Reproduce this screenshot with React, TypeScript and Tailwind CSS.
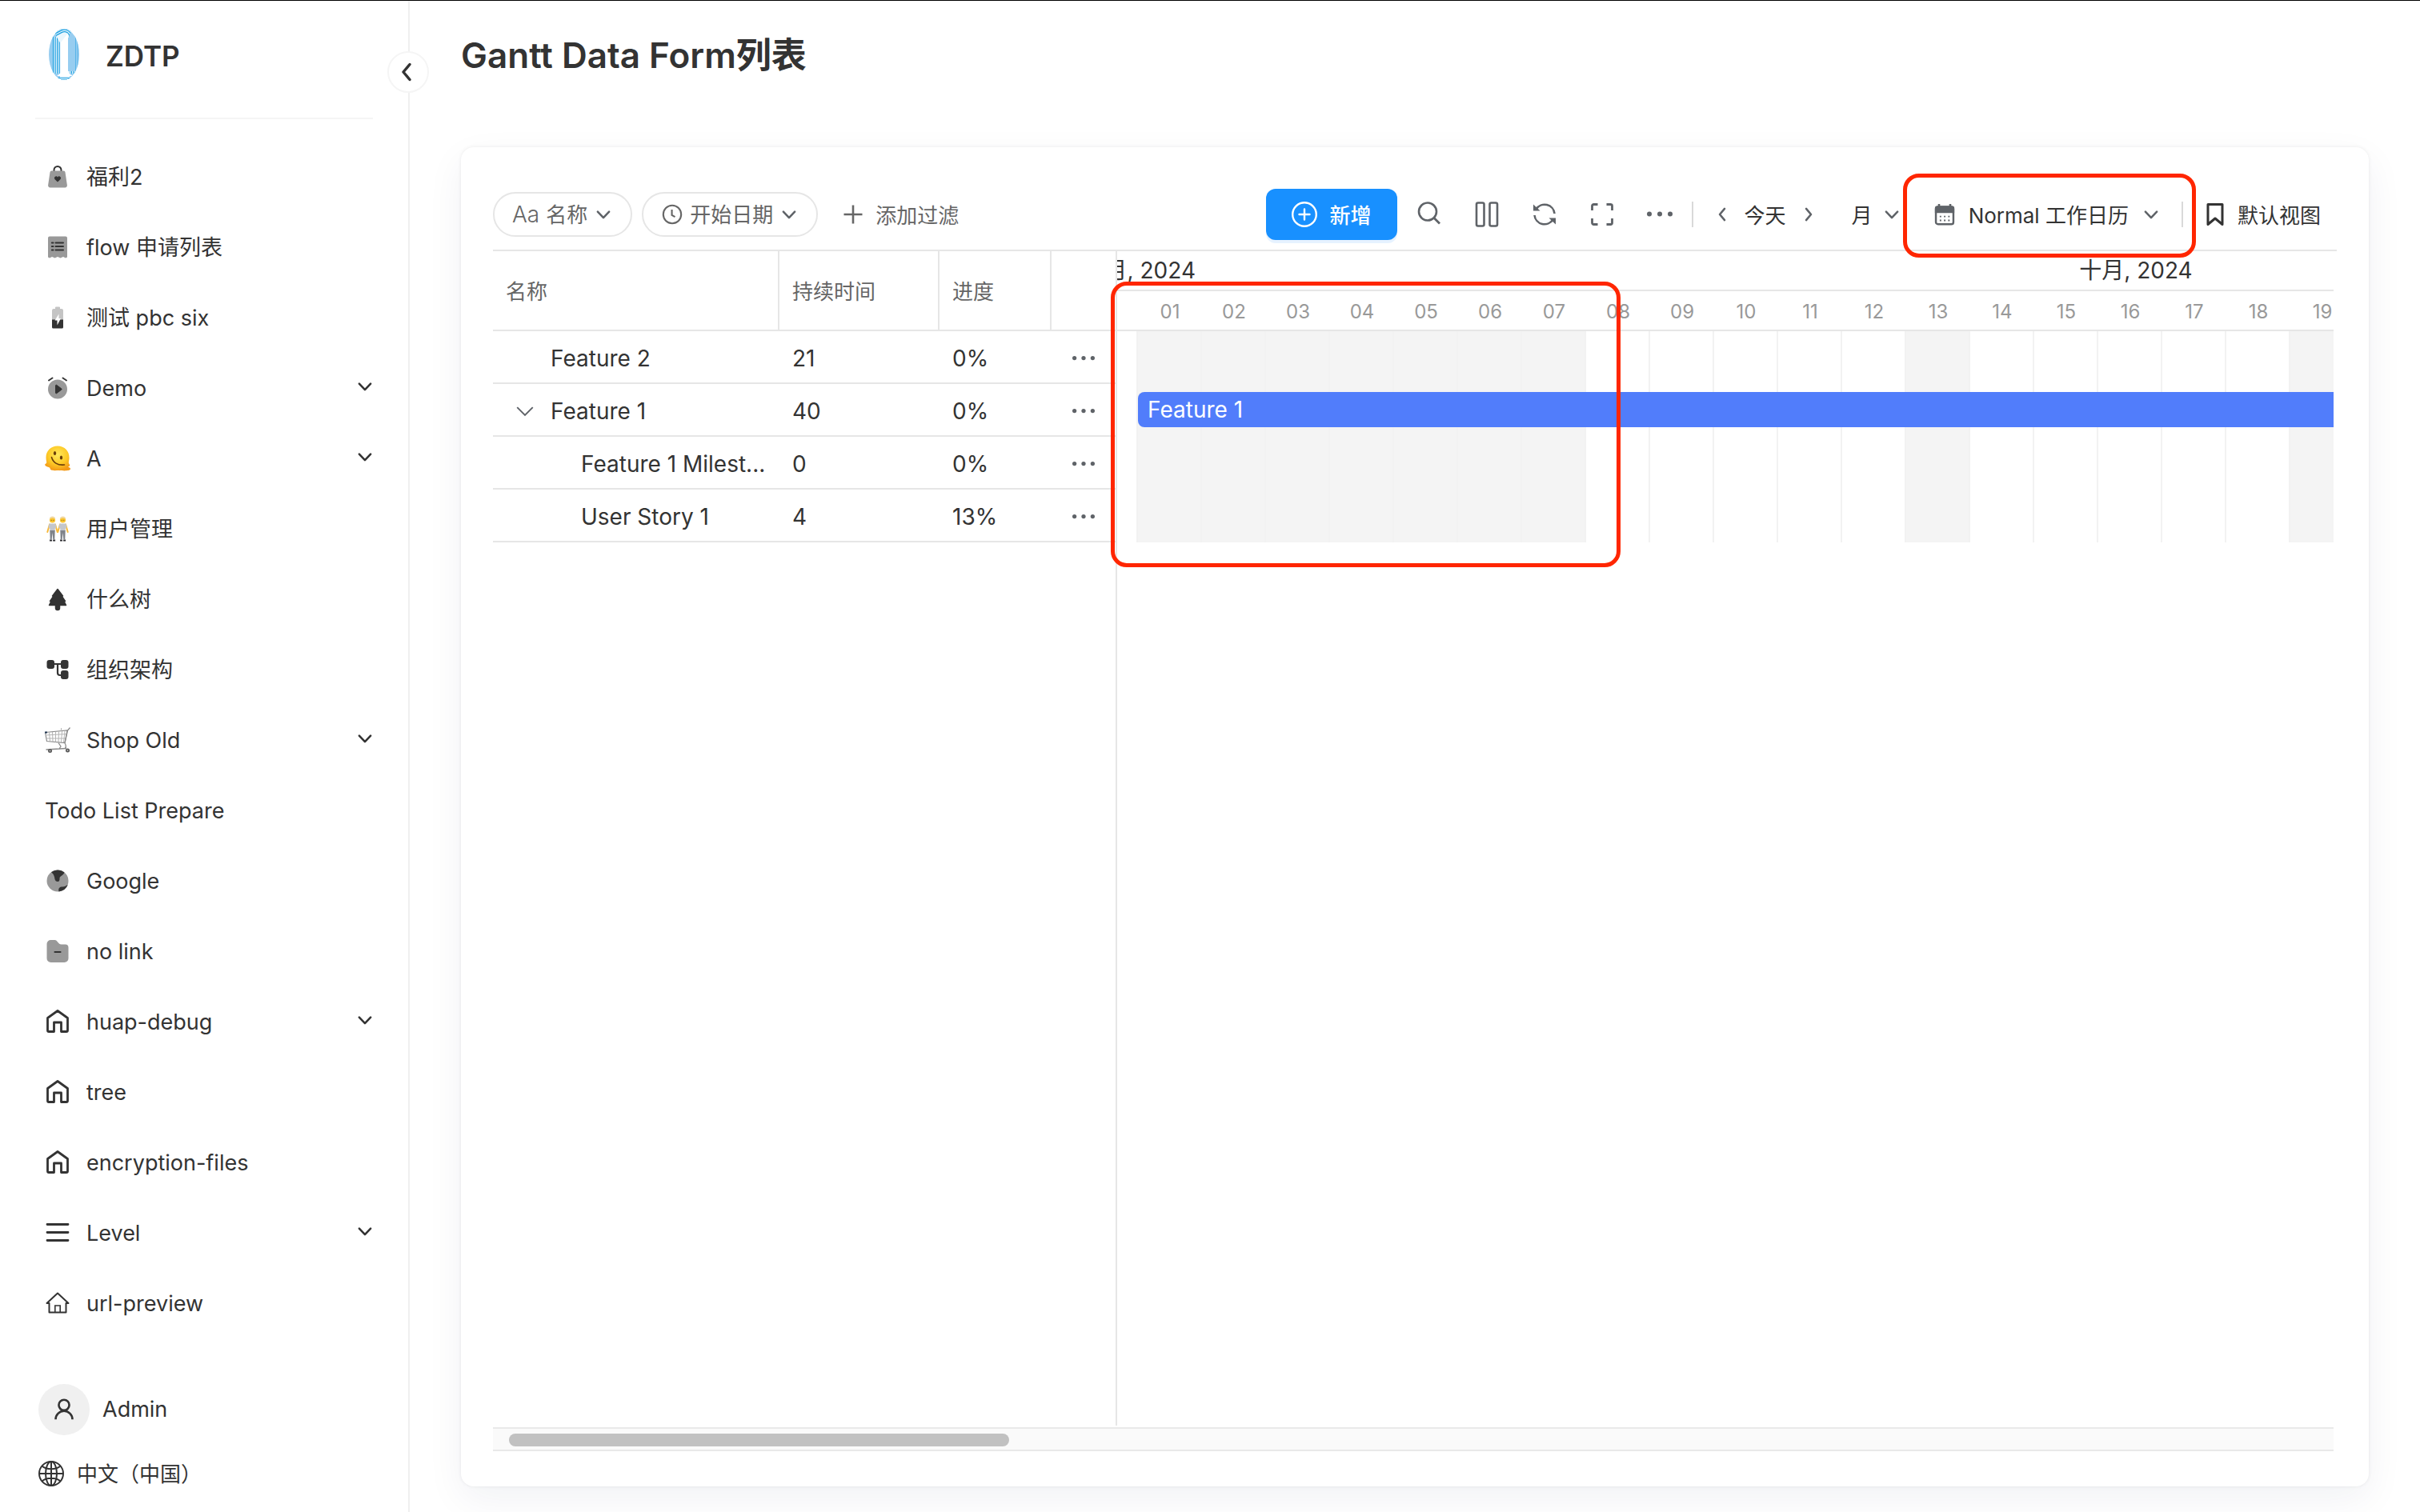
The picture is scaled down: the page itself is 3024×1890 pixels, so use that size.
import React from 'react';
import clsx from 'clsx';

interface IconProps {
  className?: string;
}

interface MenuItem {
  label: string;
  icon?: React.ReactNode;
  expandable?: boolean;
}

interface TaskRow {
  name: string;
  duration: string;
  progress: string;
  level: number;
  expandable?: boolean;
}

const Svg = ({ className = 'size-8', children }: IconProps & { children: React.ReactNode }) => (
  <svg viewBox="0 0 32 32" fill="none" className={clsx('shrink-0', className)} aria-hidden="true">
    {children}
  </svg>
);

const Logo = () => (
  <svg viewBox="0 0 40 66" fill="none" className="h-[66px] w-10 shrink-0" aria-hidden="true">
    <defs>
      <clipPath id="logo-oval">
        <ellipse cx="20" cy="33" rx="19" ry="32" />
      </clipPath>
      <clipPath id="logo-lines">
        <path d="M0 0H30L25 14V54H40V66H0Z" />
      </clipPath>
    </defs>
    <g clipPath="url(#logo-oval)">
      <rect width="40" height="66" fill="#97cdf0" />
      <g clipPath="url(#logo-lines)" strokeLinejoin="round">
        {[29, 24, 19, 14].map((w) => (
          <React.Fragment key={w}>
            <path d="M13 15L20.5 11V57M15 59H27" stroke="#1a9fe0" strokeWidth={w} />
            <path d="M13 15L20.5 11V57M15 59H27" stroke="#eaf6fd" strokeWidth={w - 2.4} />
          </React.Fragment>
        ))}
      </g>
      <path d="M37 14V54M34.500 8V58" stroke="#58b4e8" strokeWidth="1" />
      <path d="M16 18L25 6.500V56L31 60H11L16 56Z" fill="#fff" />
      <path d="M10 62.500H31M14 65H27" stroke="#1a9fe0" strokeWidth="1.200" />
    </g>
  </svg>
);

const BagIcon = () => (
  <Svg>
    <path d="M11.500 9V7.500a4.500 4.500 0 0 1 9 0V9" stroke="#333" strokeWidth="2" />
    <path d="M8.500 8.500h15a2 2 0 0 1 2 1.700l2.400 16.300a2.600 2.600 0 0 1-2.600 3H6.700a2.600 2.600 0 0 1-2.600-3L6.500 10.200a2 2 0 0 1 2-1.700Z" fill="#999" />
    <path d="M16 22.500l-3.400-3.300a2.200 2.200 0 0 1 0-3.100 2.200 2.200 0 0 1 3.400.3 2.200 2.200 0 0 1 3.400-.3 2.200 2.200 0 0 1 0 3.100Z" fill="#333" />
  </Svg>
);

const ReceiptIcon = () => (
  <Svg>
    <path d="M6 2.500h20a2 2 0 0 1 2 2V28.500l-2 1-3-1.500-3.500 1.500L16 28l-3.500 1.500L9 28l-3 1.500-2-1V4.500a2 2 0 0 1 2-2Z" fill="#999" />
    <path d="M13.500 10.500H23M13.500 15H23M13.500 19.500H23M8.800 10.500h1.700M8.800 15h1.700M8.800 19.500h1.700" stroke="#333" strokeWidth="2" strokeLinecap="round" />
  </Svg>
);

const BatteryIcon = () => (
  <Svg>
    <path d="M13 3.500a1 1 0 0 1 1-1h4a1 1 0 0 1 1 1V5h2a2 2 0 0 1 2 2v12H9V7a2 2 0 0 1 2-2h2Z" fill="#c4c4c4" />
    <path d="M9 18.500h14V28a1.500 1.500 0 0 1-1.500 1.500h-11A1.500 1.500 0 0 1 9 28Z" fill="#333" />
    <path d="M17.500 11.500L12.500 19.500H15.500V25.500L20 17H17.500Z" fill="#fff" />
  </Svg>
);

const AlarmIcon = () => (
  <Svg>
    <circle cx="16" cy="17.500" r="12" fill="#999" />
    <path d="M5 6.500L9.500 3.500M27 6.500L22.500 3.500" stroke="#333" strokeWidth="2" strokeLinecap="round" />
    <path d="M13.500 13v9a.8.8 0 0 0 1.200.7l6-4.500a.9.9 0 0 0 0-1.400l-6-4.500a.8.8 0 0 0-1.200.7Z" fill="#333" stroke="#333" />
  </Svg>
);

const MeltingFaceIcon = () => (
  <Svg>
    <defs>
      <radialGradient id="melt" cx="0.500" cy="0.350" r="0.650">
        <stop offset="0" stopColor="#ffe95c" />
        <stop offset="0.600" stopColor="#fdc926" />
        <stop offset="1" stopColor="#f39a17" />
      </radialGradient>
    </defs>
    <path d="M16 0.500C25 0.500 30.500 7 30.500 15c0 4-1.500 6 0 8 1.500 1.500.5 3-1.500 3.500 1 1 3 .8 3 2.500 0 3-9 2.500-14 2-4 0-8 .5-10-.5-2-1-.5-2.500-3-3.500-2.500-.8-5-1.500-4.800-3.500.3-1 2.300-1 2-3C1.800 18.500 1.500 17 1.500 15 1.500 7 7 .5 16 .5Z" fill="url(#melt)" />
    <ellipse cx="12.500" cy="9.500" rx="1.700" ry="2.600" fill="#6b3f0a" />
    <ellipse cx="20.500" cy="15" rx="1.700" ry="2.600" fill="#6b3f0a" />
    <path d="M8.500 14.500C10 21 16 25 24.500 24" stroke="#6b3f0a" strokeWidth="1.600" strokeLinecap="round" />
  </Svg>
);

const Person = ({ x }: { x: number }) => (
  <g transform={`translate(${x} 0)`}>
    <path d="M3.500 10.500L0.800 20M10.500 10.500L13.200 20" stroke="#f6b93b" strokeWidth="2" strokeLinecap="round" />
    <path d="M3 9.500h8l1 5-1.800 1V19H3.800v-3.500L2 14.500Z" fill="#c3c6cc" />
    <path d="M3.800 18h6.400L9.800 29H7.800L7 21 6.200 29H4.200Z" fill="#7f838a" />
    <path d="M3.500 30.500h3M7.600 30.500h3" stroke="#2f2f33" strokeWidth="2" />
    <circle cx="7" cy="5" r="3.600" fill="#fbc531" />
    <path d="M3.300 4.200A3.700 3.700 0 0 1 10.700 4.200 5 5 0 0 0 3.300 4.200Z" fill="#f0d9a8" />
    <circle cx="5.700" cy="5.200" r="0.500" fill="#5b3a10" />
    <circle cx="8.300" cy="5.200" r="0.500" fill="#5b3a10" />
  </g>
);

const PeopleIcon = () => (
  <Svg>
    <Person x={2.5} />
    <Person x={15.5} />
  </Svg>
);

const TreeIcon = () => (
  <Svg>
    <path d="M16 3.500L22.500 12H21L25.500 18.500H24L26.500 23.500H18.500V27a2.500 2.500 0 0 1-5 0V23.500H5.500L8 18.500H6.500L11 12H9.500Z" fill="#333" stroke="#333" strokeWidth="1.500" strokeLinejoin="round" />
  </Svg>
);

const OrgIcon = () => (
  <Svg>
    <path d="M9 9H22M16 9V20a3 3 0 0 0 3 3h3" stroke="#333" strokeWidth="2.200" />
    <rect x="2.500" y="4" width="9.500" height="11" rx="3" fill="#333" />
    <rect x="20" y="4" width="9.500" height="11" rx="3" fill="#333" />
    <rect x="20" y="17" width="9.500" height="11" rx="3" fill="#333" />
  </Svg>
);

const CartIcon = () => (
  <Svg>
    <path d="M0.500 6.500L28 4 25 19.500 2.500 17.500Z" stroke="#8a8a8a" strokeWidth="1.200" />
    <path d="M1 10L27 8.500M1.800 14L26 14M5.500 6.500L6.500 17.500M9.500 6L10 18M13.500 6V18.500M17.500 5.500L17 18.500M21.500 5L20.500 19M25 5L23.500 19M20.500 1V5" stroke="#b5b5b5" strokeWidth="1" />
    <path d="M31.500 0.500L28.500 4 25 19.500M17 19.500L20 24 18 27M25 20c2 3 1.500 5 .5 7M1.500 28L27 26.500" stroke="#8a8a8a" strokeWidth="1.300" />
    <rect x="0" y="5.500" width="3" height="2" fill="#1f3550" />
    <circle cx="6.500" cy="29.500" r="2.500" fill="#555" />
    <circle cx="28.500" cy="29" r="2.500" fill="#555" />
    <circle cx="6.500" cy="29.500" r="0.900" fill="#bbb" />
    <circle cx="28.500" cy="29" r="0.900" fill="#bbb" />
  </Svg>
);

const EarthIcon = () => (
  <Svg>
    <circle cx="16" cy="16" r="13.500" fill="#999" />
    <path d="M8 5.200A13.500 13.500 0 0 1 24.500 5.500C23.500 9.500 18.500 9.500 18.500 13c0 2.500-.5 4-2.300 4-2 0-3.200-1-3.700-3C12 10.500 11.500 8 8 5.200Z" fill="#333" />
    <path d="M17.500 29.400C16.500 25.500 18.500 23.500 22 23.500c3 0 4.500-1.500 6.800-2.500A13.500 13.500 0 0 1 17.500 29.400Z" fill="#333" />
  </Svg>
);

const FolderIcon = () => (
  <Svg>
    <path d="M7.500 2h5c3 0 4.500 5.500 8 5.500h5a4 4 0 0 1 4 4V25a5 5 0 0 1-5 5h-17a5 5 0 0 1-5-5V7a5 5 0 0 1 5-5Z" fill="#999" />
    <path d="M12.500 17H19.500" stroke="#333" strokeWidth="2.200" strokeLinecap="round" />
  </Svg>
);

const HomeIcon = () => (
  <Svg>
    <path d="M3.500 11.500L16 2.500 28.500 11.500V27a1.500 1.500 0 0 1-1.500 1.500H20.500V17H11.500V28.500H5A1.500 1.500 0 0 1 3.500 27Z" stroke="#333" strokeWidth="2.800" strokeLinejoin="round" />
  </Svg>
);

const MenuIcon = () => (
  <Svg>
    <path d="M3 5.500H29M3 15.500H29M3 25.500H29" stroke="#333" strokeWidth="2.800" strokeLinecap="round" />
  </Svg>
);

const ThinHomeIcon = () => (
  <Svg>
    <path d="M2.500 16L16 3.500 29.500 16H26.500V27.500H5.500V16Z" stroke="#333" strokeWidth="2" strokeLinejoin="round" />
    <path d="M12.800 27V19H19.200V27" stroke="#333" strokeWidth="1.600" />
  </Svg>
);

const UserIcon = () => (
  <Svg className="size-7">
    <circle cx="16" cy="9.500" r="7.500" stroke="#333" strokeWidth="3" />
    <path d="M4 30a12 12 0 0 1 24 0" stroke="#333" strokeWidth="3" />
  </Svg>
);

const GlobeIcon = () => (
  <Svg>
    <g stroke="#333" strokeWidth="2">
      <circle cx="16" cy="16" r="15" />
      <ellipse cx="16" cy="16" rx="7" ry="15" />
      <path d="M16 1V31M1 16H31M4.500 6.500C10 11.500 22 11.500 27.500 6.500M4.500 25.500C10 20.500 22 20.500 27.500 25.500" />
    </g>
  </Svg>
);

const ChevronDown = ({ className = 'size-6 text-[#5f6368]' }: IconProps) => (
  <Svg className={className}>
    <path d="M6.500 11.500L16 21.500 25.500 11.500" stroke="currentColor" strokeWidth="3.400" strokeLinecap="round" strokeLinejoin="round" />
  </Svg>
);

const ChevronLeft = ({ className = 'size-6 text-[#5f6368]' }: IconProps) => (
  <Svg className={className}>
    <path d="M20 6.500L12 16 20 25.500" stroke="currentColor" strokeWidth="3.400" strokeLinecap="round" strokeLinejoin="round" />
  </Svg>
);

const ChevronRight = ({ className = 'size-6 text-[#5f6368]' }: IconProps) => (
  <Svg className={className}>
    <path d="M12 6.500L20 16 12 25.500" stroke="currentColor" strokeWidth="3.400" strokeLinecap="round" strokeLinejoin="round" />
  </Svg>
);

const ClockIcon = () => (
  <Svg className="size-7">
    <circle cx="16" cy="16" r="12.800" stroke="#666" strokeWidth="2.400" />
    <path d="M15.500 9V17L20 19.500" stroke="#666" strokeWidth="2.400" />
  </Svg>
);

const PlusIcon = () => (
  <Svg>
    <path d="M16 4.500V27.500M4.500 16H27.500" stroke="#666" strokeWidth="2.600" />
  </Svg>
);

const PlusCircleIcon = () => (
  <Svg>
    <circle cx="16" cy="16" r="14.800" stroke="#fff" strokeWidth="2.400" />
    <path d="M16 9.500V22.500M9.500 16H22.500" stroke="#fff" strokeWidth="2.400" strokeLinecap="round" />
  </Svg>
);

const SearchIcon = () => (
  <Svg>
    <circle cx="14" cy="12.500" r="11" stroke="#5f6368" strokeWidth="2.600" />
    <path d="M22 20.500L29 27.500" stroke="#5f6368" strokeWidth="2.800" />
  </Svg>
);

const ColumnsIcon = () => (
  <Svg>
    <rect x="3" y="1.500" width="9.500" height="29" rx="2" stroke="#5f6368" strokeWidth="2.600" />
    <rect x="19.500" y="1.500" width="9.500" height="29" rx="2" stroke="#5f6368" strokeWidth="2.600" />
  </Svg>
);

const RefreshIcon = () => (
  <Svg>
    <path d="M5.500 9.500A12.500 12.500 0 0 1 28.500 15M26.500 22.500A12.500 12.500 0 0 1 3.500 17" stroke="#5f6368" strokeWidth="2.600" />
    <path d="M2 3.500V11.500H10.500ZM30 28.500V20.500H21.500Z" fill="#5f6368" />
  </Svg>
);

const ExpandIcon = () => (
  <Svg>
    <path d="M3.500 11V5.500a2 2 0 0 1 2-2H10.500M21.500 3.500H26.500a2 2 0 0 1 2 2V11M28.500 21V26.500a2 2 0 0 1-2 2H21.500M10.500 28.500H5.500a2 2 0 0 1-2-2V21" stroke="#5f6368" strokeWidth="2.800" />
  </Svg>
);

const DotsIcon = ({ className = 'size-8' }: IconProps) => (
  <Svg className={className}>
    <circle cx="3" cy="15.500" r="3" fill="#5f6368" />
    <circle cx="16" cy="15.500" r="3" fill="#5f6368" />
    <circle cx="29" cy="15.500" r="3" fill="#5f6368" />
  </Svg>
);

const CalendarIcon = () => (
  <Svg className="size-7">
    <path d="M8 1V6M24 1V6" stroke="#5f6368" strokeWidth="3" />
    <rect x="3.500" y="5" width="25" height="25" rx="3" stroke="#5f6368" strokeWidth="2.800" />
    <path d="M2.100 7a3 3 0 0 1 3-3h21.800a3 3 0 0 1 3 3v7H2.100Z" fill="#5f6368" />
    <path d="M9 19h2.200M15 19h2.200M21 19h2.200M9 24.500h2.200M15 24.500h2.200M21 24.500h2.200" stroke="#5f6368" strokeWidth="2.200" />
  </Svg>
);

const BookmarkIcon = () => (
  <Svg>
    <path d="M7 3.500H25V28.500L16 21 7 28.500Z" stroke="#333" strokeWidth="3" strokeLinejoin="round" />
  </Svg>
);

const menuItems: MenuItem[] = [
  { label: '福利2', icon: <BagIcon /> },
  { label: 'flow 申请列表', icon: <ReceiptIcon /> },
  { label: '测试 pbc six', icon: <BatteryIcon /> },
  { label: 'Demo', icon: <AlarmIcon />, expandable: true },
  { label: 'A', icon: <MeltingFaceIcon />, expandable: true },
  { label: '用户管理', icon: <PeopleIcon /> },
  { label: '什么树', icon: <TreeIcon /> },
  { label: '组织架构', icon: <OrgIcon /> },
  { label: 'Shop Old', icon: <CartIcon />, expandable: true },
  { label: 'Todo List Prepare' },
  { label: 'Google', icon: <EarthIcon /> },
  { label: 'no link', icon: <FolderIcon /> },
  { label: 'huap-debug', icon: <HomeIcon />, expandable: true },
  { label: 'tree', icon: <HomeIcon /> },
  { label: 'encryption-files', icon: <HomeIcon /> },
  { label: 'Level', icon: <MenuIcon />, expandable: true },
  { label: 'url-preview', icon: <ThinHomeIcon /> },
];

const tasks: TaskRow[] = [
  { name: 'Feature 2', duration: '21', progress: '0%', level: 0 },
  { name: 'Feature 1', duration: '40', progress: '0%', level: 0, expandable: true },
  { name: 'Feature 1 Milest...', duration: '0', progress: '0%', level: 1 },
  { name: 'User Story 1', duration: '4', progress: '13%', level: 1 },
];

const days = Array.from({ length: 19 }, (_, i) => String(i + 1).padStart(2, '0'));
const daysOff = ['01', '02', '03', '04', '05', '06', '07', '13', '19'];

const Sidebar = () => (
  <aside className="relative flex w-[512px] shrink-0 flex-col border-r-2 border-[#f0f0f0] pb-8 text-[27px]">
    <div className="mx-11 flex h-[148px] items-start gap-8 border-b-2 border-[#f5f5f5] px-4 pt-[34px]">
      <Logo />
      <span className="pt-[11px] text-[35px] leading-[48px] font-semibold">ZDTP</span>
    </div>
    <button
      aria-label="Collapse sidebar"
      className="absolute top-[63px] -right-[26px] z-10 flex size-[52px] items-center justify-center rounded-full border-2 border-[#f5f5f5] bg-white pr-1"
    >
      <ChevronLeft className="size-8 text-[#333]" />
    </button>
    <nav className="flex flex-1 flex-col gap-2 pt-8 pr-[42px] pl-11">
      {menuItems.map((item) => {
        const content = (
          <>
            {item.icon}
            <span className="flex-1 pt-0.5 text-left">{item.label}</span>
            {item.expandable && <ChevronDown className="mb-1 size-6 text-[#333]" />}
          </>
        );
        const itemClass = 'flex h-20 w-full items-center gap-5 rounded-lg pl-3';
        return item.expandable ? (
          <button key={item.label} className={itemClass}>
            {content}
          </button>
        ) : (
          <a key={item.label} href="#" className={itemClass}>
            {content}
          </a>
        );
      })}
    </nav>
    <div className="flex flex-col gap-8 px-12">
      <button className="flex items-center gap-4">
        <span className="flex size-16 items-center justify-center rounded-full bg-[#f0f0f0]">
          <UserIcon />
        </span>
        <span>Admin</span>
      </button>
      <button className="flex h-8 items-center gap-4">
        <GlobeIcon />
        <span className="pt-0.5 text-[26px]">中文（中国）</span>
      </button>
    </div>
  </aside>
);

const Toolbar = () => (
  <div className="flex items-center justify-between border-b-2 border-[#e6e6e6] pb-3">
    <div className="flex items-center gap-3 text-[#666]">
      <button className="flex h-14 items-center gap-2 rounded-full border-2 border-[#e6e6e6] px-[22px]">
        <span className="text-[28px] font-light">Aa</span>
        <span className="pt-0.5">名称</span>
        <ChevronDown />
      </button>
      <button className="flex h-14 items-center gap-2 rounded-full border-2 border-[#e6e6e6] px-[22px]">
        <ClockIcon />
        <span className="pt-0.5">开始日期</span>
        <ChevronDown />
      </button>
      <button className="flex h-14 items-center gap-3 px-4">
        <PlusIcon />
        <span className="pt-1">添加过滤</span>
      </button>
    </div>
    <div className="flex items-center pr-5">
      <button className="mr-6 flex h-16 items-center gap-4 rounded-xl bg-[#1890ff] px-8 font-medium text-white shadow-[0_4px_0_#e6f2ff]">
        <PlusCircleIcon />
        <span className="pt-1">新增</span>
      </button>
      <div className="flex items-center gap-10">
        <button aria-label="Search"><SearchIcon /></button>
        <button aria-label="Columns"><ColumnsIcon /></button>
        <button aria-label="Refresh"><RefreshIcon /></button>
        <button aria-label="Fullscreen"><ExpandIcon /></button>
        <button aria-label="More"><DotsIcon /></button>
      </div>
      <div className="mx-6 h-8 w-0.5 bg-[#d9d9d9]" />
      <div className="flex items-center gap-4">
        <button aria-label="Previous"><ChevronLeft /></button>
        <button className="pt-1">今天</button>
        <button aria-label="Next"><ChevronRight /></button>
      </div>
      <button className="ml-[30px] flex items-center gap-3 pl-3">
        <span className="pt-1">月</span>
        <ChevronDown />
      </button>
      <div className="relative ml-2 flex items-center gap-[26px] pl-8">
        <button className="flex items-center gap-4">
          <CalendarIcon />
          <span className="pt-1">Normal 工作日历</span>
          <ChevronDown />
        </button>
        <div className="h-8 w-0.5 bg-[#d9d9d9]" />
        <div className="pointer-events-none absolute -top-[33px] -right-4 -bottom-9 -left-1.5 z-10 rounded-[20px] border-[5px] border-[#ff2600]" />
      </div>
      <button className="ml-6 flex items-center gap-3">
        <BookmarkIcon />
        <span className="pt-1">默认视图</span>
      </button>
    </div>
  </div>
);

const TaskTable = () => (
  <div className="w-[780px] shrink-0 border-r-2 border-[#e6e6e6]">
    <table className="w-full table-fixed border-separate border-spacing-0 text-left">
      <colgroup>
        <col className="w-[358px]" />
        <col className="w-[200px]" />
        <col className="w-[140px]" />
        <col />
      </colgroup>
      <thead>
        <tr className="h-[100px] text-[#666]">
          <th className="border-r-2 border-b-2 border-[#e6e6e6] px-4 pt-1 pb-0 font-normal">名称</th>
          <th className="border-r-2 border-b-2 border-[#e6e6e6] px-4 pt-1 pb-0 font-normal">持续时间</th>
          <th className="border-r-2 border-b-2 border-[#e6e6e6] px-4 pt-1 pb-0 font-normal">进度</th>
          <th className="border-b-2 border-[#e6e6e6]" />
        </tr>
      </thead>
      <tbody className="text-[28px]">
        {tasks.map((task) => (
          <tr key={task.name} className="h-[66px]">
            <td className="border-b-2 border-[#e6e6e6] px-0 pt-1 pb-0">
              <div className={clsx('flex items-center whitespace-nowrap', task.level === 0 ? 'pl-6' : 'pl-[62px]')}>
                <span className="flex w-12 shrink-0 pl-1">
                  {task.expandable && (
                    <button aria-label="Toggle">
                      <Svg className="size-6">
                        <path d="M3 9.500L16 22.500 29 9.500" stroke="#5f6368" strokeWidth="2.600" />
                      </Svg>
                    </button>
                  )}
                </span>
                <span>{task.name}</span>
              </div>
            </td>
            <td className="border-b-2 border-[#e6e6e6] px-4 pt-1 pb-0">{task.duration}</td>
            <td className="border-b-2 border-[#e6e6e6] px-4 pt-1 pb-0">{task.progress}</td>
            <td className="border-b-2 border-[#e6e6e6] pt-1 pr-0 pb-0 pl-[26px]">
              <button aria-label="Row actions" className="flex">
                <DotsIcon className="size-7" />
              </button>
            </td>
          </tr>
        ))}
      </tbody>
    </table>
  </div>
);

const Timeline = () => (
  <div className="relative min-w-0 flex-1">
    <div className="overflow-hidden">
      <div className="flex h-[50px] items-center border-b-2 border-[#e6e6e6] text-[28px]">
        <div className="flex w-[98px] shrink-0 justify-end overflow-hidden whitespace-nowrap">月, 2024</div>
        <div className="w-[2350px] shrink-0 text-center">十月, 2024</div>
      </div>
      <div className="flex h-[50px] items-center border-b-2 border-[#e6e6e6] pt-1 pl-[26px] text-2xl text-[#999]">
        {days.map((day) => (
          <div key={day} className="w-20 shrink-0 text-center">{day}</div>
        ))}
      </div>
      <div className="relative h-[264px]">
        <div className="flex h-full">
          <div className="w-[26px] shrink-0 border-r-2 border-[#f2f2f2]" />
          {days.map((day) => (
            <div
              key={day}
              className={clsx('w-20 shrink-0 border-r-2 border-[#f2f2f2]', daysOff.includes(day) && 'bg-[#f4f4f4]')}
            />
          ))}
        </div>
        <div className="absolute top-[76px] right-0 left-[26px] flex h-11 items-center rounded-l-lg bg-[#517dfb] pl-3 text-[28px] text-white">
          Feature 1
        </div>
      </div>
    </div>
    <div className="pointer-events-none absolute top-[38px] -left-2 z-10 h-[357px] w-[637px] rounded-[20px] border-[5px] border-[#ff2600]" />
  </div>
);

export default function App() {
  return (
    <div className="flex min-h-screen border-t border-black bg-white font-[Inter,'Noto_Sans_CJK_SC',sans-serif] text-[26px] leading-8 text-[#333]">
      <Sidebar />
      <main className="flex min-w-0 flex-1 flex-col px-16 pb-8">
        <h1 className="flex h-[183px] items-start pt-[38px] text-[44px] leading-[60px] font-semibold">Gantt Data Form列表</h1>
        <section className="flex flex-1 flex-col rounded-2xl bg-white px-10 pt-[52px] pb-11 shadow-[0_0_4px_rgba(0,0,0,0.08),0_16px_48px_rgba(20,40,80,0.06)]">
          <Toolbar />
          <div className="mr-1 flex flex-1 flex-col">
            <div className="flex flex-1">
              <TaskTable />
              <Timeline />
            </div>
            <div className="mt-0.5 h-[30px] border-y-2 border-[#e9e9e9] bg-[#fafafa] px-5 py-1.5">
              <div className="h-4 w-[625px] rounded-full bg-[#c1c1c1]" />
            </div>
          </div>
        </section>
      </main>
    </div>
  );
}
